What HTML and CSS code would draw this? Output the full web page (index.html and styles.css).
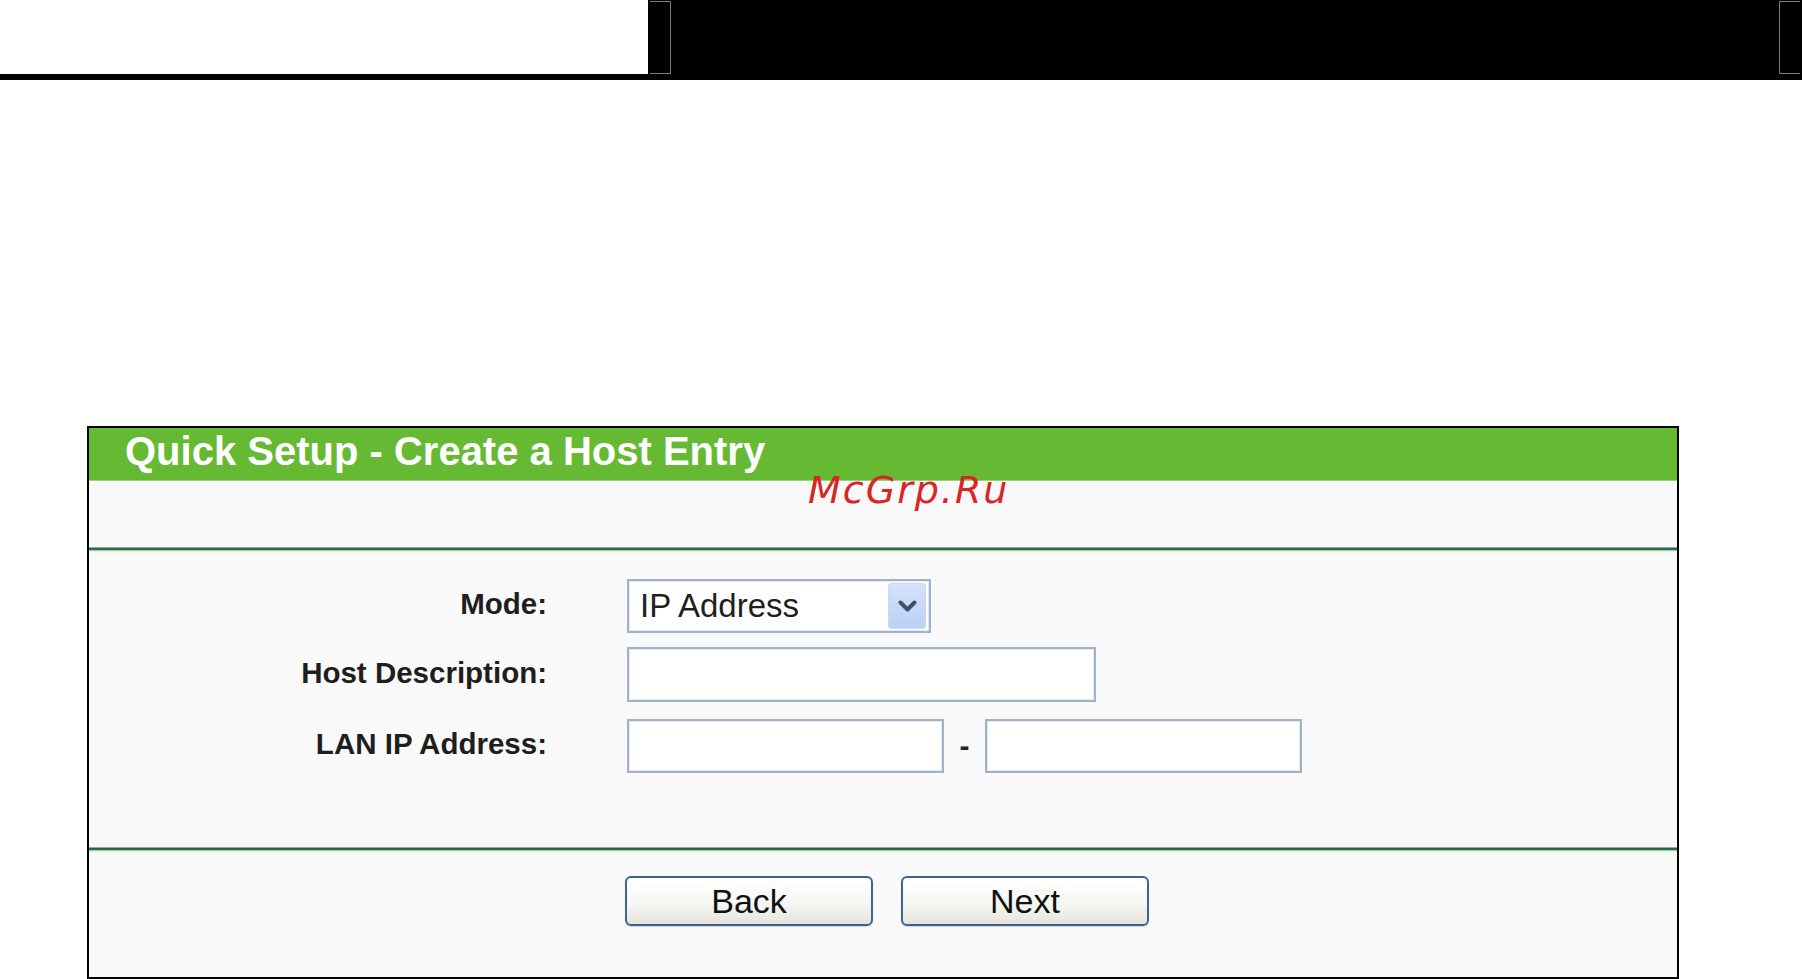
FILE: index.html
```html
<!DOCTYPE html>
<html lang="en">
<head>
<meta charset="utf-8">
<title>Quick Setup - Create a Host Entry</title>
<link rel="stylesheet" href="styles.css">
</head>
<body>
<div class="topbar">
  <div class="topbar-white"></div>
  <div class="topbar-dark">
    <div class="bkt bkt-l"></div>
    <div class="bkt bkt-r"></div>
  </div>
</div>

<div class="panel">
  <div class="panel-head">Quick Setup - Create a Host Entry</div>
  <div class="head-line"></div>
  <div class="spacer"></div>
  <div class="sep"></div>

  <div class="form">
    <div class="row row-1">
      <label class="lbl">Mode:</label>
      <div class="select">
        <span class="select-text">IP Address</span>
        <span class="select-btn">
          <svg width="19" height="13" viewBox="0 0 19 13"><polyline points="2.5,2.5 9.5,9.5 16.5,2.5" fill="none" stroke="#3c4f6b" stroke-width="4" stroke-linecap="round" stroke-linejoin="round"/></svg>
        </span>
      </div>
    </div>
    <div class="row row-2">
      <label class="lbl">Host Description:</label>
      <input class="field field-wide" type="text">
    </div>
    <div class="row row-3">
      <label class="lbl">LAN IP Address:</label>
      <input class="field field-ip" type="text">
      <span class="dash">-</span>
      <input class="field field-ip" type="text">
    </div>
  </div>

  <div class="sep"></div>

  <div class="buttons">
    <button class="btn" type="button">Back</button>
    <button class="btn" type="button">Next</button>
  </div>

  <div class="watermark">McGrp.Ru</div>
</div>
</body>
</html>
```

FILE: styles.css
```css
html, body {
  margin: 0;
  padding: 0;
  background: #ffffff;
  overflow: hidden;
}

body {
  font-family: "Liberation Sans", Arial, sans-serif;
  width: 1802px;
  height: 979px;
}

/* top strip */
.topbar {
  display: flex;
  height: 80px;
  background: #000000;
}

.topbar-white {
  width: 648px;
  height: 74px;
  background: #ffffff;
}

.topbar-dark {
  flex: 1;
  display: flex;
  justify-content: space-between;
  padding: 1px 2px 6px 2px;
}

.bkt {
  width: 20px;
  border-top: 1px solid #7a7a7a;
  border-bottom: 1px solid #7a7a7a;
}

.bkt-l {
  border-right: 1px solid #7a7a7a;
}

.bkt-r {
  border-left: 1px solid #7a7a7a;
}

/* panel */
.panel {
  position: relative;
  box-sizing: border-box;
  width: 1592px;
  height: 553px;
  margin: 346px 0 0 87px;
  border: 2px solid #000000;
  background: #f9f9f9;
}

.panel-head {
  height: 52px;
  line-height: 46px;
  padding-left: 36px;
  background: #66b933;
  color: #ffffff;
  font-size: 40px;
  font-weight: bold;
  white-space: nowrap;
}

.head-line {
  height: 1px;
  background: #9ad174;
}

.spacer {
  height: 66px;
}

.sep {
  height: 4px;
  background: linear-gradient(#86b597 0, #86b597 1px, #2a6b45 1px, #2a6b45 3px, #a9ccb6 3px);
  box-shadow: 0 1px 0 #e4efe8, 0 2px 0 #f1f6f3;
}

/* form */
.form {
  padding: 28px 0 74px 0;
}

.row {
  display: flex;
  align-items: center;
  height: 54px;
}

.row-1 {
  margin-bottom: 14px;
}

.row-2 {
  height: 55px;
  margin-bottom: 17px;
}

.lbl {
  box-sizing: border-box;
  width: 458px;
  margin-right: 80px;
  padding-bottom: 4px;
  text-align: right;
  font-size: 29.5px;
  font-weight: bold;
  color: #1e1e1e;
  white-space: nowrap;
}

.select {
  box-sizing: border-box;
  display: flex;
  align-items: center;
  width: 304px;
  height: 54px;
  padding: 2px 3px 2px 11px;
  border: 2px solid #9fb3c8;
  box-shadow: inset 0 0 0 1px #e3e9f0;
  background: #ffffff;
}

.select-text {
  font-size: 33px;
  color: #1f1f1f;
  white-space: nowrap;
}

.select-btn {
  box-sizing: border-box;
  display: flex;
  align-items: center;
  justify-content: center;
  width: 38px;
  height: 46px;
  margin-left: auto;
  border: 1px solid #c8d8f6;
  border-radius: 3px;
  background: linear-gradient(#d4e1fb, #bcd1f6);
}

.field {
  box-sizing: border-box;
  height: 100%;
  margin: 0;
  padding: 0 8px;
  border: 2px solid #9fb3c8;
  box-shadow: inset 0 0 0 1px #e3e9f0;
  background: #ffffff;
  font-family: "Liberation Sans", Arial, sans-serif;
  font-size: 30px;
  outline: none;
}

.field-wide {
  width: 469px;
}

.field-ip {
  width: 317px;
}

.dash {
  width: 41px;
  text-align: center;
  font-size: 30px;
  font-weight: bold;
  color: #222222;
}

/* buttons */
.buttons {
  display: flex;
  justify-content: center;
  gap: 28px;
  padding: 25px 0 0 8px;
}

.btn {
  box-sizing: border-box;
  width: 248px;
  height: 50px;
  padding: 0;
  border: 2px solid #3b6393;
  border-radius: 6px;
  background: linear-gradient(#ffffff 0%, #f6f6f3 55%, #e6e4dc 100%);
  box-shadow: 0 1px 1px rgba(0, 0, 0, 0.15);
  font-family: "Liberation Sans", Arial, sans-serif;
  font-size: 34px;
  color: #111111;
  line-height: 44px;
}

/* watermark overlay */
.watermark {
  position: absolute;
  left: 719px;
  top: 43px;
  font-family: "DejaVu Sans", sans-serif;
  font-style: italic;
  font-size: 38px;
  line-height: 38px;
  letter-spacing: 2px;
  color: #d72626;
  white-space: nowrap;
}
```
